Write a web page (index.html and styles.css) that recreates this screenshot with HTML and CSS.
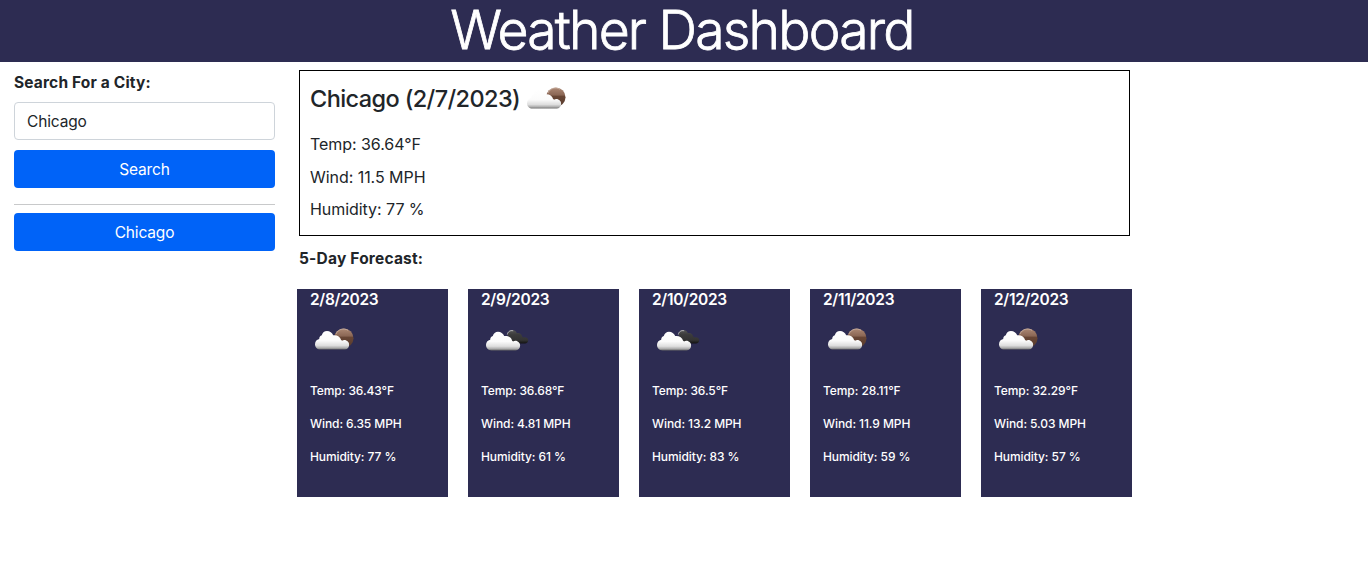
FILE: index.html
```html
<!DOCTYPE html>
<html lang="en">
<head>
<meta charset="utf-8">
<title>Weather Dashboard</title>
<link rel="stylesheet" href="styles.css">
</head>
<body>
<svg class="defs" width="0" height="0" aria-hidden="true">
  <defs>
    <linearGradient id="white-cloud" x1="0" y1="0" x2="0" y2="1">
      <stop offset="0" stop-color="#fff"/><stop offset=".52" stop-color="#fbfbfb"/><stop offset=".78" stop-color="#dedede"/><stop offset=".92" stop-color="#aaa"/><stop offset="1" stop-color="#666"/>
    </linearGradient>
    <linearGradient id="moon" x1="0" y1="0" x2="0" y2="1">
      <stop offset="0" stop-color="#ad8874"/><stop offset=".38" stop-color="#8b6755"/><stop offset=".46" stop-color="#684635"/><stop offset="1" stop-color="#573a2c"/>
    </linearGradient>
    <linearGradient id="dark-cloud" x1="0" y1="0" x2="0" y2="1">
      <stop offset="0" stop-color="#555"/><stop offset=".35" stop-color="#3b3b3b"/><stop offset=".75" stop-color="#333"/><stop offset="1" stop-color="#111"/>
    </linearGradient>
    <path id="cloud" d="M10.500 27.600C7.200 27.600 5 25.300 5 22.300c0-2.900 1.600-4.900 4.200-5.400C9.300 14.900 10.300 13.700 11.800 13.200 12.500 10.600 14.400 9 17 9c2.800 0 5.200 1.700 6.200 4.200 3.900-.4 7 1.200 7.900 4.700.4.200.7.500.9.900 1.200-.9 2.800-1 4.200-.4 2 .8 3.100 2.500 2.900 4.600-.2 2.800-1.900 4.600-4.500 4.600z"/>
    <symbol id="few-clouds" viewBox="0 0 50 34">
      <circle cx="33.800" cy="16.200" r="9.700" fill="url(#moon)"/>
      <path d="M26 12c2.200-5 7.800-6.300 12-3.700" fill="none" stroke="#d3bfb3" stroke-width=".9" opacity=".7"/>
      <use href="#cloud" fill="url(#white-cloud)"/>
    </symbol>
    <symbol id="broken-clouds" viewBox="0 0 50 34">
      <path d="M26.500 13C26.700 9.800 28.800 8 31.200 8c2.300 0 4 1.200 4.700 3.200 2.500-.5 4.800.9 5.300 3.200.4.300.7.700.8 1.200 2.400-1 5.200.2 5.200 2.600 0 1.700-1.200 3.300-3.300 3.300H31z" fill="url(#dark-cloud)"/>
      <path d="M26.300 12.500c.5-2.800 3-4.500 5.900-3.700" fill="none" stroke="#bbb" stroke-width="1"/>
      <use href="#cloud" y="0.800" fill="url(#white-cloud)"/>
    </symbol>
  </defs>
</svg>
<header class="banner"><h1 class="title">Weather Dashboard</h1></header>
<div class="layout">
  <aside class="sidebar">
    <label class="label" for="city">Search For a City:</label>
    <input class="field" id="city" type="text" value="Chicago">
    <button class="button search">Search</button>
    <hr class="rule">
    <button class="button">Chicago</button>
  </aside>
  <main class="content">
    <section class="current">
      <h2 class="city"><span class="city-name">Chicago (2/7/2023)</span><svg class="icon"><use href="#few-clouds"/></svg></h2>
      <p class="reading temp">Temp: 36.64°F</p>
      <p class="reading">Wind: 11.5 MPH</p>
      <p class="reading">Humidity: 77 %</p>
    </section>
    <h3 class="subtitle">5-Day Forecast:</h3>
    <section class="forecast">
      <article class="card">
        <h4 class="date">2/8/2023</h4><svg class="icon"><use href="#few-clouds"/></svg>
        <p class="detail">Temp: 36.43°F</p><p class="detail">Wind: 6.35 MPH</p><p class="detail">Humidity: 77 %</p>
      </article>
      <article class="card">
        <h4 class="date">2/9/2023</h4><svg class="icon"><use href="#broken-clouds"/></svg>
        <p class="detail">Temp: 36.68°F</p><p class="detail">Wind: 4.81 MPH</p><p class="detail">Humidity: 61 %</p>
      </article>
      <article class="card">
        <h4 class="date">2/10/2023</h4><svg class="icon"><use href="#broken-clouds"/></svg>
        <p class="detail">Temp: 36.5°F</p><p class="detail">Wind: 13.2 MPH</p><p class="detail">Humidity: 83 %</p>
      </article>
      <article class="card">
        <h4 class="date">2/11/2023</h4><svg class="icon"><use href="#few-clouds"/></svg>
        <p class="detail">Temp: 28.11°F</p><p class="detail">Wind: 11.9 MPH</p><p class="detail">Humidity: 59 %</p>
      </article>
      <article class="card">
        <h4 class="date">2/12/2023</h4><svg class="icon"><use href="#few-clouds"/></svg>
        <p class="detail">Temp: 32.29°F</p><p class="detail">Wind: 5.03 MPH</p><p class="detail">Humidity: 57 %</p>
      </article>
    </section>
  </main>
</div>
</body>
</html>
```

FILE: styles.css
```css
* { box-sizing: border-box; margin: 0; }
body { background: #fff; color: #212529; font: 400 16px/24px Inter, "Liberation Sans", sans-serif; }
.defs { display: block; height: 0; }
.banner { height: 62px; background: #2d2c52; color: #fff; text-align: center; }
.title { padding-right: 4px; font-size: 53.5px; font-weight: 300; line-height: 60px; letter-spacing: -1.8px; -webkit-text-stroke: 0.8px #fff; }
.layout { display: flex; padding: 8px 0 0 14px; gap: 24px; }
.sidebar { width: 261px; display: flex; flex-direction: column; }
.label { height: 32px; padding-top: 1px; font-weight: 700; font-size: 15.5px; letter-spacing: 0.16px; }
.field { height: 38px; padding: 0 12px; border: 1px solid #ced4da; border-radius: 4px; color: #212529; font: inherit; font-size: 15.5px; letter-spacing: -0.15px; background: #fff; }
.button { height: 38px; padding-top: 2px; border: 0; border-radius: 4px; background: #0063f8; color: #fff; font: inherit; font-size: 15.5px; letter-spacing: -0.15px; }
.search { margin: 10px 0 16px; }
.rule { height: 1px; border: 0; background: #c8c9ca; margin-bottom: 8px; }
.content { width: 831px; }
.current { height: 166px; border: 1px solid #000; padding: 10px; }
.city { height: 34px; display: flex; font-size: 23.5px; font-weight: 500; line-height: 36px; }
.city-name { width: 211.5px; white-space: nowrap; letter-spacing: -0.6px; }
.icon { display: block; width: 50px; height: 34px; flex: none; }
.reading { font-size: 16px; margin-bottom: 8.5px; letter-spacing: -0.05px; }
.temp { margin-top: 17px; }
.subtitle { margin-top: 11px; height: 42px; font-size: 15.5px; font-weight: 700; line-height: 24px; letter-spacing: 0.2px; }
.forecast { display: grid; grid-template-columns: repeat(5, 151px); gap: 20px; margin-left: -2px; }
.card { height: 208px; padding: 1px 13px 0; background: #2d2c52; color: #fff; }
.date { font-size: 15.5px; font-weight: 600; line-height: 20px; margin-bottom: 12px; letter-spacing: -0.3px; }
.card .icon { margin-bottom: 26px; }
.detail { font-size: 12px; line-height: 18px; font-weight: 500; margin-bottom: 15px; letter-spacing: -0.08px; }
```
